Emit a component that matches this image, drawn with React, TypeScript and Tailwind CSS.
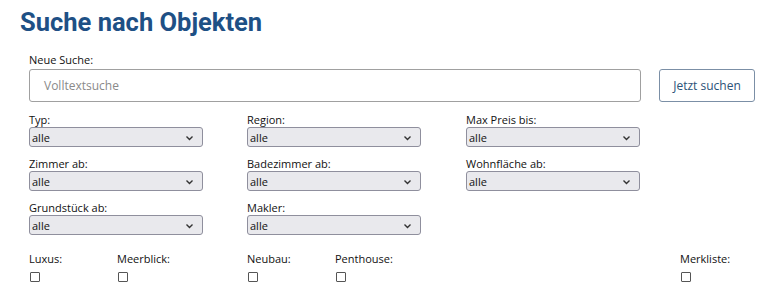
import React from 'react'

const selects = [
  'Typ:',
  'Region:',
  'Max Preis bis:',
  'Zimmer ab:',
  'Badezimmer ab:',
  'Wohnfläche ab:',
  'Grundstück ab:',
  'Makler:',
]

function Chevron() {
  return (
    <svg width="9" height="6" viewBox="0 0 9 6" className="pointer-events-none absolute right-[8px] top-[7px]">
      <path d="M1.5 1.5 L4.5 4.5 L7.5 1.5" fill="none" stroke="#333" strokeWidth="1.4" />
    </svg>
  )
}

function SelectField({ label }: { label: string }) {
  return (
    <div className="flex flex-col">
      <label className="h-[13px] text-[11px] leading-[13px] font-medium text-[#111]">{label}</label>
      <div className="relative mt-[1px] h-[20px] w-[174px] rounded-[3px] border border-[#8f8f9d] bg-[#e9e9ed]">
        <span className="absolute left-[2px] top-[3px] text-[11px] leading-[13px] text-[#111]">alle</span>
        <Chevron />
      </div>
    </div>
  )
}

function Check({ label, className = '' }: { label: string; className?: string }) {
  return (
    <div className={`flex flex-col ${className}`}>
      <span className="text-[11px] leading-[13px] font-medium text-[#111]">{label}</span>
      <span className="mt-[7px] ml-[1px] h-[10px] w-[10px] rounded-[1px] border border-[#555] bg-white" />
    </div>
  )
}

export default function App() {
  return (
    <main className="h-[294px] w-[768px] overflow-hidden bg-white font-['Open_Sans',sans-serif]">
      <h1 className="pl-[20px] pt-[5px] font-['Roboto',sans-serif] text-[25.5px] leading-[34px] font-bold text-[#1e5085]">
        Suche nach Objekten
      </h1>

      <div className="pl-[29px] pt-[14px]">
        <div className="flex items-end">
          <div className="flex w-[612px] flex-col">
            <label className="text-[11px] leading-[13px] font-medium text-[#111]">Neue Suche:</label>
            <div className="mt-[3px] flex h-[33px] items-center rounded-[3px] border border-[#a0a0a0] bg-white pl-[14px] text-[12px] text-[#8a8a8a]">
              Volltextsuche
            </div>
          </div>
          <button className="ml-[18px] h-[33px] w-[96px] rounded-[3px] border border-[#7b8fa6] bg-white text-[12px] text-[#2b5278]">
            Jetzt suchen
          </button>
        </div>

        <div className="mt-[11px] grid grid-cols-[218px_219px_175px] gap-y-[10px]">
          {selects.map((s) => (
            <SelectField key={s} label={s} />
          ))}
        </div>

        <div className="mt-[17px] flex">
          <Check label="Luxus:" className="w-[88px]" />
          <Check label="Meerblick:" className="w-[130px]" />
          <Check label="Neubau:" className="w-[88px]" />
          <Check label="Penthouse:" className="w-[345px]" />
          <Check label="Merkliste:" />
        </div>
      </div>
    </main>
  )
}
